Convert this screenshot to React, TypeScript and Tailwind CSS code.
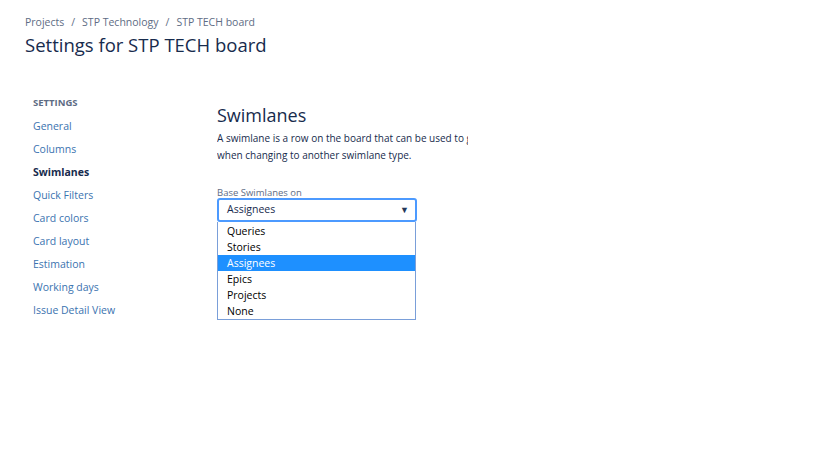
import { useState } from 'react';

const navItems = [
  'General',
  'Columns',
  'Swimlanes',
  'Quick Filters',
  'Card colors',
  'Card layout',
  'Estimation',
  'Working days',
  'Issue Detail View',
];

const options = ['Queries', 'Stories', 'Assignees', 'Epics', 'Projects', 'None'];

export default function App() {
  const [selected] = useState('Assignees');
  const [active] = useState('Swimlanes');

  return (
    <div className="h-[460px] w-[819px] bg-white font-['Open_Sans','Noto_Sans',sans-serif] text-[#172b4d]">
      <header className="px-[25px] pt-[14px]">
        <nav className="flex items-center gap-[7px] text-[10.5px] leading-[16px] text-[#5e6c84]">
          <span>Projects</span>
          <span>/</span>
          <span>STP Technology</span>
          <span>/</span>
          <span>STP TECH board</span>
        </nav>
        <h1 className="mt-[2px] text-[18.5px] font-medium leading-[26px] text-[#172b4d]">
          Settings for STP TECH board
        </h1>
      </header>

      <div className="mt-[38px] flex">
        <aside className="w-[217px] shrink-0 pl-[33px]">
          <h2 className="text-[9.5px] font-bold uppercase leading-[14px] text-[#5e6c84]">Settings</h2>
          <ul className="mt-[5px] flex flex-col">
            {navItems.map((item) => (
              <li
                key={item}
                className={
                  item === active
                    ? 'text-[10.5px] font-bold leading-[23px] text-[#172b4d]'
                    : 'text-[10.5px] leading-[23px] text-[#3b73af]'
                }
              >
                {item}
              </li>
            ))}
          </ul>
        </aside>

        <main className="w-[251px] shrink-0 overflow-hidden">
          <h2 className="mt-[6px] text-[18px] font-medium leading-[26px] text-[#172b4d]">Swimlanes</h2>
          <p className="mt-[2px] whitespace-nowrap text-[10px] leading-[17px] text-[#172b4d]">
            A swimlane is a row on the board that can be used to group issues. Your swimlane settings are kept
            <br />
            when changing to another swimlane type.
          </p>

          <label className="mt-[23px] block text-[9.5px] leading-[11px] text-[#5e6c84]">Base Swimlanes on</label>
          <div className="w-[200px]">
            <div className="flex h-[24px] items-center justify-between rounded-[3px] border-2 border-[#4c9aff] pl-[8px] pr-[6px] text-[10.5px] text-[#172b4d]">
              <span>{selected}</span>
              <span className="text-[9px] text-[#253858]">▼</span>
            </div>
            <ul className="mr-[1px] border border-t-0 border-[#7a9fd9] pt-[1px] text-[10.5px] leading-[16px] text-black">
              {options.map((o) => (
                <li
                  key={o}
                  className={o === selected ? 'bg-[#1e90ff] pl-[9px] text-white' : 'pl-[9px]'}
                >
                  {o}
                </li>
              ))}
            </ul>
          </div>
        </main>
      </div>
    </div>
  );
}
